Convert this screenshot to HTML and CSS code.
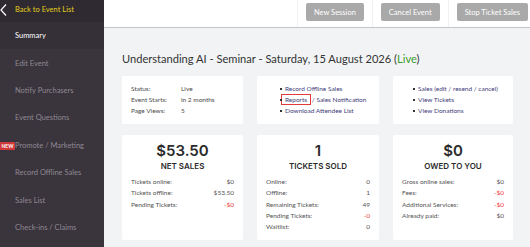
FILE: index.html
```html
<!DOCTYPE html>
<html lang="en">
<head>
    <meta charset="UTF-8">
    <meta name="viewport" content="width=device-width, initial-scale=1.0">
    <title>Event Summary</title>
    <link rel="stylesheet" href="styles.css">
</head>
<body>
    <aside class="sidebar">
        <a href="#" class="back-link">
            <svg class="chevron" width="7" height="12" viewBox="0 0 7 12"><path d="M6 0.5 L1 6 L6 11.5" fill="none" stroke="#ffffff" stroke-width="1.2"/></svg>
            Back to Event List
        </a>
        <nav class="side-nav">
            <a href="#" class="side-item active">Summary</a>
            <a href="#" class="side-item">Edit Event</a>
            <a href="#" class="side-item">Notify Purchasers</a>
            <a href="#" class="side-item">Event Questions</a>
            <a href="#" class="side-item"><span class="badge-new">NEW</span>Promote / Marketing</a>
            <a href="#" class="side-item">Record Offline Sales</a>
            <a href="#" class="side-item">Sales List</a>
            <a href="#" class="side-item">Check-ins / Claims</a>
        </nav>
    </aside>

    <main class="content">
        <header class="topbar">
            <div class="action"><button class="btn">New Session</button></div>
            <div class="action"><button class="btn">Cancel Event</button></div>
            <div class="action last"><button class="btn">Stop Ticket Sales</button></div>
        </header>

        <div class="page">
            <h1 class="event-title">Understanding AI - Seminar - Saturday, 15 August 2026 (<span class="live">Live</span>)</h1>

            <div class="cards top-cards">
                <div class="card info-card">
                    <div class="info-row"><span class="info-label">Status:</span><span>Live</span></div>
                    <div class="info-row"><span class="info-label">Event Starts:</span><span>in 2 months</span></div>
                    <div class="info-row"><span class="info-label">Page Views:</span><span>5</span></div>
                </div>
                <div class="card link-card">
                    <ul>
                        <li><a href="#">Record Offline Sales</a></li>
                        <li><a href="#" class="highlight">Reports</a><a href="#"> / Sales Notification</a></li>
                        <li><a href="#">Download Attendee List</a></li>
                    </ul>
                </div>
                <div class="card link-card narrow">
                    <ul>
                        <li><a href="#">Sales (edit / resend / cancel)</a></li>
                        <li><a href="#">View Tickets</a></li>
                        <li><a href="#">View Donations</a></li>
                    </ul>
                </div>
            </div>

            <div class="cards stat-cards">
                <div class="card stat-card">
                    <div class="amount">$53.50</div>
                    <div class="stat-name">NET SALES</div>
                    <div class="stat-row"><span>Tickets online:</span><span>$0</span></div>
                    <div class="stat-row"><span>Tickets offline:</span><span>$53.50</span></div>
                    <div class="stat-row"><span>Pending Tickets:</span><span class="neg">-$0</span></div>
                </div>
                <div class="card stat-card">
                    <div class="amount">1</div>
                    <div class="stat-name">TICKETS SOLD</div>
                    <div class="stat-row"><span>Online:</span><span>0</span></div>
                    <div class="stat-row"><span>Offline:</span><span>1</span></div>
                    <div class="stat-row"><span>Remaining Tickets:</span><span>49</span></div>
                    <div class="stat-row"><span>Pending Tickets:</span><span class="neg">-0</span></div>
                    <div class="stat-row"><span>Waitlist:</span><span>0</span></div>
                </div>
                <div class="card stat-card">
                    <div class="amount">$0</div>
                    <div class="stat-name">OWED TO YOU</div>
                    <div class="stat-row"><span>Gross online sales:</span><span>$0</span></div>
                    <div class="stat-row"><span>Fees:</span><span class="neg">-$0</span></div>
                    <div class="stat-row"><span>Additional Services:</span><span class="neg">-$0</span></div>
                    <div class="stat-row"><span>Already paid:</span><span>$0</span></div>
                </div>
            </div>
        </div>
    </main>
</body>
</html>
```

FILE: styles.css
```css
* {
    margin: 0;
    padding: 0;
    box-sizing: border-box;
}

body {
    font-family: Lato, 'Open Sans', sans-serif;
    display: flex;
    height: 100vh;
    overflow: hidden;
    background: #f2f3f5;
}

a {
    text-decoration: none;
}

/* Sidebar */
.sidebar {
    width: 104px;
    flex-shrink: 0;
    background: #3a343c;
    display: flex;
    flex-direction: column;
}

.back-link {
    height: 22px;
    display: flex;
    align-items: center;
    gap: 8px;
    padding-bottom: 3px;
    background: #2f2a31;
    color: #e3cf1c;
    font-size: 7.5px;
}

.side-nav {
    display: flex;
    flex-direction: column;
}

.side-item {
    height: 27.4px;
    display: flex;
    align-items: center;
    padding-left: 15px;
    color: #8f8992;
    font-size: 7.5px;
    position: relative;
}

.side-item.active {
    color: #ffffff;
    background: #353037;
}

.badge-new {
    position: absolute;
    left: 0;
    top: 10px;
    background: #d0393c;
    color: #ffffff;
    font-size: 5px;
    font-weight: 700;
    padding: 1px 1.5px;
    border-radius: 0 1px 1px 0;
}

/* Main area */
.content {
    flex: 1;
    display: flex;
    flex-direction: column;
}

.topbar {
    height: 28px;
    background: #ffffff;
    border-bottom: 1.5px solid #c4c4c4;
    display: flex;
    justify-content: flex-end;
}

.action {
    display: flex;
    align-items: center;
    padding: 0 8px 3px 8px;
    border-left: 1px solid #f1f1f1;
}

.action.last {
    padding-right: 2px;
}

.btn {
    background: #a9a9a9;
    color: #ffffff;
    border: none;
    border-radius: 2px;
    height: 18px;
    padding: 0 8px;
    font-family: Lato, sans-serif;
    font-size: 7.5px;
}

.page {
    padding: 0 16px 0 18px;
}

.event-title {
    margin: 23px 0 9px;
    font-size: 11.1px;
    font-weight: 400;
    color: #333333;
    line-height: 16px;
}

.live {
    color: #3b9c2e;
}

.cards {
    display: grid;
    grid-template-columns: 121px 122px 120px;
    column-gap: 14px;
}

.card {
    background: #ffffff;
    border-radius: 2px;
}

.top-cards .card {
    height: 48px;
    padding: 7px 9px;
    font-size: 6.5px;
    line-height: 11px;
}

.info-row {
    display: flex;
    color: #4a4a4a;
}

.info-label {
    width: 50px;
}

.link-card ul {
    list-style: none;
    padding-left: 14px;
}

.link-card.narrow ul {
    padding-left: 11px;
}

.link-card li {
    position: relative;
    padding-left: 5px;
}

.link-card li::before {
    content: "";
    position: absolute;
    left: 0;
    top: 5px;
    width: 2px;
    height: 2px;
    background: #333333;
}

.link-card a {
    color: #3f3d7a;
}

.highlight {
    outline: 1px solid #e23a3a;
    outline-offset: 0;
    padding: 1px 3px;
    margin-left: -3px;
}

.stat-cards {
    margin-top: 11px;
}

.stat-card {
    height: 105px;
    padding: 7px 9px;
}

.amount {
    text-align: center;
    font-family: Inter, Lato, sans-serif;
    font-size: 15px;
    font-weight: 600;
    color: #2b2b2b;
    line-height: 18px;
}

.stat-name {
    text-align: center;
    font-family: Inter, Lato, sans-serif;
    font-size: 8px;
    font-weight: 600;
    color: #2b2b2b;
    line-height: 12px;
    margin-bottom: 4px;
}

.stat-row {
    display: flex;
    justify-content: space-between;
    font-size: 6.5px;
    line-height: 11.3px;
    color: #555555;
}

.neg {
    color: #f03c3c;
}
```
